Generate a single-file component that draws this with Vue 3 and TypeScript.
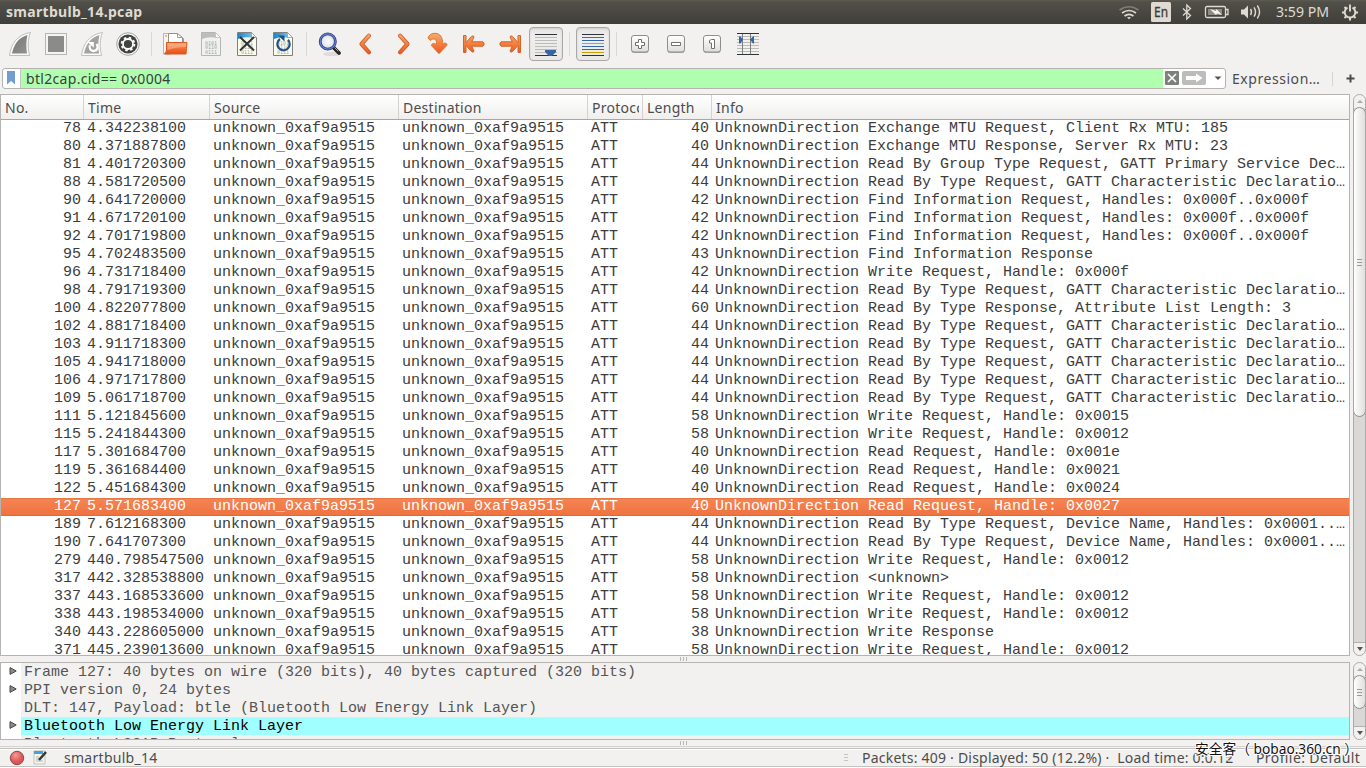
<script setup lang="ts">
interface Packet {
  no: number
  time: string
  len: number
  info: string
}

const host = 'unknown_0xaf9a9515'
const byType = 'Read By Type Request, GATT Characteristic Declaratio…'
const byName = 'Read By Type Request, Device Name, Handles: 0x0001..…'
const find = 'Find Information Request, Handles: 0x000f..0x000f'

const source: [number, string, number, string][] = [
  [78, '4.342238100', 40, 'Exchange MTU Request, Client Rx MTU: 185'],
  [80, '4.371887800', 40, 'Exchange MTU Response, Server Rx MTU: 23'],
  [81, '4.401720300', 44, 'Read By Group Type Request, GATT Primary Service Dec…'],
  [88, '4.581720500', 44, byType],
  [90, '4.641720000', 42, find],
  [91, '4.671720100', 42, find],
  [92, '4.701719800', 42, find],
  [95, '4.702483500', 43, 'Find Information Response'],
  [96, '4.731718400', 42, 'Write Request, Handle: 0x000f'],
  [98, '4.791719300', 44, byType],
  [100, '4.822077800', 60, 'Read By Type Response, Attribute List Length: 3'],
  [102, '4.881718400', 44, byType],
  [103, '4.911718300', 44, byType],
  [105, '4.941718000', 44, byType],
  [106, '4.971717800', 44, byType],
  [109, '5.061718700', 44, byType],
  [111, '5.121845600', 58, 'Write Request, Handle: 0x0015'],
  [115, '5.241844300', 58, 'Write Request, Handle: 0x0012'],
  [117, '5.301684700', 40, 'Read Request, Handle: 0x001e'],
  [119, '5.361684400', 40, 'Read Request, Handle: 0x0021'],
  [122, '5.451684300', 40, 'Read Request, Handle: 0x0024'],
  [127, '5.571683400', 40, 'Read Request, Handle: 0x0027'],
  [189, '7.612168300', 44, byName],
  [190, '7.641707300', 44, byName],
  [279, '440.798547500', 58, 'Write Request, Handle: 0x0012'],
  [317, '442.328538800', 58, '<unknown>'],
  [337, '443.168533600', 58, 'Write Request, Handle: 0x0012'],
  [338, '443.198534000', 58, 'Write Request, Handle: 0x0012'],
  [340, '443.228605000', 38, 'Write Response'],
  [371, '445.239013600', 58, 'Write Request, Handle: 0x0012'],
]
const packets: Packet[] = source.map(([no, time, len, info]) => ({ no, time, len, info }))
const selected = 127

const details = [
  { text: 'Frame 127: 40 bytes on wire (320 bits), 40 bytes captured (320 bits)', open: true, hot: false },
  { text: 'PPI version 0, 24 bytes', open: true, hot: false },
  { text: 'DLT: 147, Payload: btle (Bluetooth Low Energy Link Layer)', open: false, hot: false },
  { text: 'Bluetooth Low Energy Link Layer', open: true, hot: true },
  { text: 'Bluetooth L2CAP Protocol', open: true, hot: false },
]
const lineColors = ['#d8362f', '#3465a4', '#73c926', '#3465a4', '#75507b', '#c4a000']
</script>

<template>
  <div class="win">
    <header class="titlebar">
      <b class="title">smartbulb_14.pcap</b>
      <svg class="tray" width="266" height="24" viewBox="1100 0 266 24">
        <g fill="none" stroke-width="1.7">
          <path d="M1119.500 10q9.500-6.500 19 0" stroke="#807e77" />
          <path d="M1122 13q7-5 14 0M1124.500 16q4.500-3.400 9 0" stroke="#dfdbd2" />
        </g>
        <path d="M1127 17.500q2-1.200 4 0l-2 1.800z" fill="#dfdbd2" />
        <rect x="1151" y="2" width="20" height="20" rx="1.500" fill="#dfdbd2" />
        <text x="1154" y="17" class="lang" textLength="14" lengthAdjust="spacingAndGlyphs">En</text>
        <path d="M1183 8.500l7.500 7-3.700 3.500V5l3.700 3.500-7.500 7" fill="none" stroke="#dfdbd2" stroke-width="1.300" />
        <rect x="1205.500" y="6.500" width="20" height="11" rx="1.500" fill="none" stroke="#dfdbd2" stroke-width="1.300" />
        <path d="M1226 9.500h2v5h-2" fill="none" stroke="#dfdbd2" stroke-width="1.300" />
        <rect x="1208" y="9" width="14" height="6" fill="#8d8b84" />
        <path d="M1210 9l6 2 .5-2 5.500 6-5-1.500-1 1.500z" fill="#f5f3ee" />
        <path d="M1241 9.500h3l4-4v13l-4-4h-3z" fill="#dfdbd2" />
        <g fill="none" stroke="#dfdbd2" stroke-width="1.400">
          <path d="M1250.500 9q2 3 0 6M1254 7.300q3 4.700 0 9.400M1257.300 5.500q4.500 6.500 0 13" />
        </g>
        <text x="1276" y="17" class="clock" textLength="53" lengthAdjust="spacingAndGlyphs">3:59 PM</text>
        <path d="M1347.500 7.600a5.300 5.300 0 1 0 5 0" fill="none" stroke="#dfdbd2" stroke-width="1.900" />
        <path d="M1350 4.500v7" stroke="#dfdbd2" stroke-width="1.900" />
        <path d="M1344.500 7l1.700 1.700M1355.500 7l-1.700 1.700M1342 12.500h2.500M1355.500 12.500h2.500M1344.500 18l1.700-1.700M1355.500 18l-1.700-1.700M1350 17.500v3" stroke="#dfdbd2" stroke-width="2" />
      </svg>
    </header>

    <svg width="0" height="0" class="defs">
      <defs>
        <linearGradient id="orange" gradientUnits="userSpaceOnUse" x1="0" y1="7" x2="0" y2="28"><stop stop-color="#f3b06c" /><stop offset="1" stop-color="#f0531a" /></linearGradient>
        <linearGradient id="gray" x1="0" y1="0" x2="1" y2="1"><stop stop-color="#777976" /><stop offset="1" stop-color="#929391" /></linearGradient>
        <linearGradient id="folder" x1="0" y1="0" x2="0" y2="1"><stop stop-color="#f79a62" /><stop offset="1" stop-color="#e94b15" /></linearGradient>
        <linearGradient id="key" x1="0" y1="0" x2="0" y2="1"><stop stop-color="#fff" /><stop offset="1" stop-color="#deddda" /></linearGradient>
        <linearGradient id="sky" x1="0" y1="0" x2="1" y2="0"><stop stop-color="#2384c4" /><stop offset="1" stop-color="#6fc6ee" /></linearGradient>
        <radialGradient id="red" cx=".4" cy=".3"><stop stop-color="#f49a96" /><stop offset="1" stop-color="#dc5554" /></radialGradient>
        <radialGradient id="lens"><stop stop-color="#fff" /><stop offset="1" stop-color="#d6dce6" /></radialGradient>
      </defs>
    </svg>

    <nav class="toolbar">
      <svg class="ic" viewBox="0 0 36 36">
        <path d="M7.500 29.500C9 18 15 8.500 28.500 6.500 25.800 13 25.500 22 27.600 29.500z" fill="#fafafa" stroke="#bebebc" />
        <path d="M10 27.500C12 18.500 16.500 11.500 25.500 9 24 15 24 21 25 27.500z" fill="url(#gray)" />
      </svg>
      <svg class="ic" viewBox="0 0 36 36">
        <rect x="7.500" y="7.500" width="21" height="21" fill="#f4f4f3" stroke="#b5b5b3" />
        <rect x="10" y="10" width="16" height="16" fill="#8b8c8a" />
      </svg>
      <svg class="ic" viewBox="0 0 36 36">
        <path d="M7.500 29.500C9 18 15 8.500 28.500 6.500 25.800 13 25.500 22 27.600 29.500z" fill="#fafafa" stroke="#c1c1bf" />
        <path d="M10 27.500C12 18.500 16.500 11.500 25.500 9 24 15 24 21 25 27.500z" fill="#a2a3a1" />
        <path d="M16 19c-1.500 3.500 1 6.300 3.800 6 3.800-.3 5-4.300 2.700-7" fill="none" stroke="#fff" stroke-width="2.300" />
        <path d="M13.500 16h6.300v5.800z" fill="#fff" />
      </svg>
      <svg class="ic" viewBox="0 0 36 36">
        <circle cx="18" cy="18" r="11.300" fill="#f8f8f7" stroke="#a5a5a2" />
        <circle cx="18" cy="18" r="9.600" fill="#414342" />
        <circle cx="18" cy="18" r="6.400" fill="none" stroke="#fff" stroke-width="1.800" stroke-dasharray="2.500 2.527" />
        <circle cx="18" cy="18" r="5" fill="none" stroke="#fff" stroke-width="1.800" />
      </svg>
      <i class="sep" />
      <svg class="ic" viewBox="0 0 36 36">
        <path d="M6.500 28V7.500h5l2 2V28z" fill="#f7f5f2" stroke="#b9b5ae" />
        <path d="M11.500 18V7.500h9l5 4V18z" fill="#fff" stroke="#8f918d" />
        <path d="M20.500 7.500v4h5M25.500 12.500h1v4" fill="none" stroke="#9c9e9a" />
        <path d="M8 10h2" stroke="#f2a445" stroke-width="1.500" />
        <path d="M9.500 16.500h20.500q-.5 6-1 11.500H7.500q2-2 2-4z" fill="url(#folder)" stroke="#d95a22" />
        <path d="M10.500 17.500h18.500v3.500q-10 0-18.500 3z" fill="#ffc49a" opacity=".5" />
      </svg>
      <svg v-for="kind in ['save', 'close', 'reload']" :key="kind" class="ic" viewBox="0 0 36 36">
        <path d="M8.500 6.500h14l5 5v18h-19z" :fill="kind === 'save' ? '#f1f1f0' : '#fdfdec'" :stroke="kind === 'save' ? '#b5b5b3' : '#7e817c'" />
        <path d="M9 7h13l2 5q-8-2-15 1z" :fill="kind === 'save' ? '#bdbdbb' : 'url(#sky)'" />
        <path d="M22.500 6.500v5h5z" fill="#fff" :stroke="kind === 'save' ? '#bdbdbb' : '#979994'" stroke-width=".8" />
        <g class="bits">
          <text x="12" y="18.500">0101</text><text x="12" y="23">0110</text><text x="12" y="27.500">0111</text>
        </g>
        <path v-if="kind === 'close'" d="M11 11l14 13.500M25 11L11 24.500" stroke="#2e3436" stroke-width="2" />
        <g v-if="kind === 'reload'">
          <path d="M15 13a6.200 6.200 0 1 0 8 .8" fill="none" stroke="#234f91" stroke-width="2.200" />
          <path d="M13 9.500h6.500v6z" fill="#234f91" />
        </g>
      </svg>
      <i class="sep" />
      <svg class="ic" viewBox="0 0 36 36">
        <ellipse cx="20" cy="28" rx="9" ry="2" fill="#dddcd9" />
        <path d="M21.500 21.500l5.500 5.500" stroke="#252826" stroke-width="3.800" stroke-linecap="round" />
        <path d="M22.500 21.500l3.700 3.700" stroke="#a4a6a2" stroke-width="1" />
        <circle cx="15.800" cy="15.500" r="7.600" fill="url(#lens)" stroke="#2d3c80" stroke-width="2.800" />
        <circle cx="15.800" cy="15.500" r="7.600" fill="none" stroke="#6483cd" stroke-width="1.200" />
      </svg>
      <svg class="ic" viewBox="0 0 36 36">
        <path class="rim" d="M21 9.700l-7.500 8.300 7.500 8.300" /><path class="core" d="M21 9.700l-7.500 8.300 7.500 8.300" />
      </svg>
      <svg class="ic" viewBox="0 0 36 36">
        <path class="rim" d="M16 9.700l7.500 8.300-7.500 8.300" /><path class="core" d="M16 9.700l7.500 8.300-7.500 8.300" />
      </svg>
      <svg class="ic" viewBox="0 0 36 36">
        <path d="M8 12C9 8.500 12 7.300 15 7.300c5 0 7.800 3.700 7.800 11.200 2-2.500 4.500-1.300 4.200.7L19 27.700l-7.500-8c-.3-2.200 2.500-3.200 5-1.200.3-4-1-5.500-3-5.500-1.500 0-2 .8-3.200 1.500z" fill="url(#orange)" stroke="#d9702f" stroke-width=".9" stroke-linejoin="round" />
      </svg>
      <svg class="ic" viewBox="0 0 36 36">
        <path class="arrow" d="M7.500 9.500H10v7l5.500-6q2.200-1.500 2.500.5l-2.300 4.800h11.300q2.500 2.200 0 4.400H15.700l2.300 4.800q-.3 2-2.500.5L10 19.500v7H7.500z" />
      </svg>
      <svg class="ic" viewBox="0 0 36 36">
        <path class="arrow" d="M28.500 9.500H26v7l-5.500-6q-2.200-1.500-2.500.5l2.300 4.800H9q-2.500 2.200 0 4.400h11.300l-2.300 4.800q.3 2 2.500.5l5.500-6v7h2.500z" />
      </svg>
      <span class="ic pressed">
        <svg viewBox="0 0 36 36">
          <path d="M7 8.500h22M7 29.500h22" stroke="#2e3436" />
          <path d="M7 11.500h22M7 14.500h22M7 17.500h22M7 20.500h22M7 23.500h22M7 26.500h22" stroke="#babdb6" />
          <path d="M17 24h11v2l-4 4h-3l-4-4z" fill="#3465a4" />
        </svg>
      </span>
      <i class="sep" />
      <span class="ic pressed">
        <svg viewBox="0 0 36 36">
          <path d="M7 8.500h22M7 29.500h22" stroke="#2e3436" />
          <path v-for="(c, i) in lineColors" :key="i" :d="`M7 ${11.5 + i * 3}h22`" :stroke="c" />
        </svg>
      </span>
      <i class="sep" />
      <svg v-for="k in ['plus', 'minus', 'one']" :key="k" class="ic" viewBox="0 0 36 36">
        <rect x="9.500" y="10" width="17" height="17" rx="2.500" fill="#a8aaa6" />
        <rect x="9.500" y="9.500" width="17" height="16.500" rx="2.500" fill="url(#key)" stroke="#8c8e8a" />
        <path v-if="k === 'plus'" class="glyph" d="M16.500 13.500h3v3h3v3h-3v3h-3v-3h-3v-3h3z" />
        <path v-else-if="k === 'minus'" class="glyph" d="M13.500 16.500h9v3h-9z" />
        <path v-else class="glyph" d="M17.500 13.500h3v9h-3v-5.500h-2v-2.500z" />
      </svg>
      <svg class="ic" viewBox="0 0 36 36">
        <path d="M7 10.500h22M7 13.500h22M7 16.500h22M7 19.500h22M7 22.500h22M7 25.500h22" stroke="#babdb6" />
        <path d="M7 7.500h22M7 28.500h22" stroke="#2e3436" />
        <path d="M12.500 8v20M20.500 8v20" stroke="#7c7f7a" />
        <path d="M9 10.500h1.500l2.500 3-2.500 4H9zM24 10.500h-1l-3 3 3 4h1z" fill="#3465a4" />
      </svg>
    </nav>

    <div class="filter">
      <div class="field">
        <span class="mark"><svg width="8" height="14" viewBox="0 0 8 14"><path d="M0 0h8v13.500L4 10l-4 3.500z" fill="#739dcf" /></svg></span>
        <span class="expr">btl2cap.cid== 0x0004</span>
        <span class="acts">
          <svg width="62" height="19" viewBox="1163 69 62 19">
            <rect x="1165" y="71" width="14" height="14" rx="1" fill="#7e807c" />
            <path d="M1168 74l8 8M1176 74l-8 8" stroke="#fff" stroke-width="1.600" />
            <rect x="1182" y="71" width="24" height="14" rx="2" fill="#bcbdbb" />
            <path d="M1186 76h10v-2.500l6.500 4.500-6.500 4.500V80h-10z" fill="#fff" />
            <path d="M1214.500 76.500h7l-3.500 3.500z" fill="#555" />
          </svg>
        </span>
      </div>
      <span class="expression">Expression…</span>
      <i class="fsep" />
      <svg class="add" width="9" height="9" viewBox="0 0 9 9"><path d="M4.500 .5v8M.5 4.500h8" stroke="#4a4a4a" stroke-width="2" /></svg>
    </div>

    <section class="listpane">
      <div class="list">
        <div class="cols head">
          <span><em>No.</em></span><span><em>Time</em></span><span><em>Source</em></span><span><em>Destination</em></span>
          <span><em>Protocol</em></span><span><em>Length</em></span><span><em>Info</em></span>
        </div>
        <div v-for="p in packets" :key="p.no" class="cols row" :class="{ sel: p.no === selected }">
          <span class="num">{{ p.no }}</span><span>{{ p.time }}</span><span>{{ host }}</span><span>{{ host }}</span>
          <span>ATT</span><span class="num">{{ p.len }}</span><span>UnknownDirection {{ p.info }}</span>
        </div>
      </div>
      <div class="scroll">
        <i class="btn up" />
        <i class="thumb big"><b /></i>
        <i class="track" />
        <i class="btn down" />
      </div>
    </section>

    <div class="grip"><i /><i /><i /></div>

    <section class="detailpane">
      <div class="tree">
        <div v-for="d in details" :key="d.text" class="node" :class="{ hot: d.hot }">
          <span class="exp"><svg v-if="d.open" width="8" height="8" viewBox="0 0 8 8"><path d="M1 .6v6.800L7.200 4z" fill="#8d8d8c" stroke="#464646" /></svg></span>
          <span class="txt">{{ d.text }}</span>
        </div>
      </div>
      <div class="scroll">
        <i class="btn up" />
        <i class="thumb small"><b /></i>
        <i class="track" />
        <i class="btn down" />
      </div>
    </section>

    <div class="grip low"><i /><i /><i /></div>

    <footer class="status">
      <svg class="led" width="50" height="18" viewBox="0 748 50 18">
        <circle cx="17" cy="757" r="6.700" fill="url(#red)" stroke="#8b4a4c" />
        <path d="M34 750h11v13H34z" fill="#f4f4ec" stroke="#b4b7b2" stroke-width=".8" />
        <path d="M34 750h9v3h-9z" fill="#4aa0d4" />
        <path d="M36 756h3M36 758h3M36 760h7" stroke="#b4b7b2" />
        <path d="M39 759l7-8" stroke="#343837" stroke-width="2.500" />
      </svg>
      <span class="file">smartbulb_14</span>
      <span class="dots"><i /><i /><i /></span>
      <span class="packets">Packets: 409 · Displayed: 50 (12.2%) ·&nbsp; Load time: 0:0.12</span>
      <span class="dots"><i /><i /><i /></span>
      <span class="profile">Profile: Default</span>
    </footer>
    <div class="watermark"><svg width="166" height="22" viewBox="0 0 166 22"><text x="1" y="15" textLength="163" lengthAdjust="spacingAndGlyphs">安全客（ bobao.360.cn ）</text></svg></div>
  </div>
</template>

<style>
body { margin: 0; overflow: hidden; }
</style>

<style scoped>
.win { position: relative; width: 1366px; height: 768px; overflow: hidden; display: flex; flex-direction: column; background: #f2f1f0; color: #4c4c4c; font: 14px/20px "Noto Sans", sans-serif; }
.win * { box-sizing: border-box; }
.win > * { flex-shrink: 0; }
.defs { position: absolute; }
.titlebar { height: 24px; display: flex; justify-content: space-between; background: linear-gradient(#5d5b50 0, #504f48 10%, #3f3e39); }
.title { padding-left: 6px; line-height: 24px; font-size: 14px; color: #dfdbd2; letter-spacing: .3px; }
.lang { font: 14px "Noto Sans", sans-serif; fill: #3c3b37; stroke: #3c3b37; stroke-width: .3; }
.clock { font: 14px "Noto Sans", sans-serif; fill: #dfdbd2; }

.toolbar { height: 44px; padding: 2px 0 0 2px; display: flex; align-items: flex-start; }
.ic { display: block; width: 36px; height: 36px; flex: none; }
.ic svg { display: block; width: 36px; height: 36px; }
.pressed { width: 34px; height: 34px; margin: 1px; border: 1px solid #a9a8a6; border-radius: 4px; background: linear-gradient(#e6e5e4, #efeeed 30%, #e9e8e6); box-shadow: inset 0 1px 2px #cfcecb; }
.pressed svg { margin: -2px; }
.sep { width: 1px; height: 24px; margin: 6px 5px; background: #d9d8d6; }
.bits { font: 5px "DejaVu Sans Mono", monospace; fill: #a3a3a0; }
.rim, .core { fill: none; stroke-linecap: round; stroke-linejoin: round; }
.rim { stroke: #d26029; stroke-width: 4.200; }
.core { stroke: url(#orange); stroke-width: 2.500; }
.arrow { fill: url(#orange); stroke: #d66327; stroke-linejoin: round; }
.glyph { fill: #fff; stroke: #6f716d; }

.filter { height: 26px; display: flex; align-items: flex-start; padding-left: 2px; }
.field { width: 1224px; height: 21px; display: flex; border: 1px solid #b5b3b0; border-radius: 3px; background: #fff; overflow: hidden; }
.mark { width: 18px; border-right: 1px solid #c7c5c2; padding: 2px 0 0 4px; }
.mark svg { display: block; }
.expr { flex: 1; background: #afffaf; padding-left: 5px; line-height: 19px; color: #3c3c3c; letter-spacing: .32px; }
.acts, .acts svg { display: block; width: 62px; height: 19px; }
.expression { width: 89px; margin-left: 6px; line-height: 21px; letter-spacing: .55px; white-space: nowrap; }
.fsep { width: 1px; height: 14px; margin: 4px 13px 0 11px; background: #d6d4d2; }
.add { margin-top: 6px; }

.listpane { height: 562px; display: flex; justify-content: space-between; }
.list { width: 1350px; border: 1px solid #b6b4b1; overflow: hidden; background: #fff; }
.cols { display: grid; grid-template-columns: 82px 126px 189px 189px 55px 69px 638px; }
.head { grid-template-columns: 83px 126px 189px 189px 55px 69px 637px; height: 25px; background: linear-gradient(#fff, #f0efee); border-bottom: 1px solid #a9a7a4; letter-spacing: .25px; }
.head span { border-right: 1px solid #d5d3d0; padding: 0 3px 0 4px; line-height: 25px; overflow: hidden; }
.head span:last-child { border: 0; }
.head em { display: block; font-style: normal; overflow: hidden; white-space: nowrap; }
.row { height: 18px; font: 15px/17px "Liberation Mono", monospace; color: #3c3c3c; white-space: pre; }
.row span { padding-left: 4px; }
.row .num { padding: 0 2px 0 0; text-align: right; }
.row.sel { color: #fff; background: linear-gradient(#f58452, #ef7340); border-top: 1px solid #e97640; border-bottom: 1px solid #e26a37; line-height: 15px; }

.scroll { width: 13px; display: flex; flex-direction: column; border: 1px solid #aaa9a7; border-radius: 7px; background: #d9d8d6; overflow: hidden; }
.btn { height: 13px; background: #f2f1f0; display: flex; justify-content: center; align-items: center; flex: none; }
.btn::after { content: ""; border: 3px solid transparent; }
.up::after { border-bottom-color: #aaa; border-top: 0; }
.down::after { border-top: 4px solid #555; border-bottom: 0; }
.down { border-top: 1px solid #b1b0ae; border-radius: 0 0 6px 6px; }
.thumb { flex: none; margin: 0 -1px; border: 1px solid #8f8e8c; border-radius: 7px; background: linear-gradient(90deg, #fff, #efeeed 50%, #dededc); display: flex; align-items: center; justify-content: center; }
.thumb b { width: 5px; height: 7px; background: repeating-linear-gradient(#999 0 1px, transparent 1px 3px); }
.big { height: 310px; margin-top: -1px; }
.small { height: 34px; margin-top: -1px; }
.track { flex: 1; }

.grip { height: 6px; display: flex; justify-content: center; align-items: center; gap: 2px; }
.grip i { width: 1px; height: 4px; background: #b9b7b5; }
.detailpane { height: 78px; display: flex; justify-content: space-between; }
.tree { width: 1350px; border: 1px solid #b6b4b1; overflow: hidden; }
.node { height: 18px; display: flex; font: 15px/19px "Liberation Mono", monospace; color: #555; white-space: pre; }
.exp { width: 20px; background: #fff; padding: 4px 0 0 8px; }
.exp svg { display: block; }
.txt { flex: 1; padding-left: 3px; }
.hot .txt { background: #a0ffff; color: #000; }
.low { height: 7px; border-bottom: 1px solid #d5d3d1; }

.status { height: 19px; margin-top: 1px; display: flex; align-items: flex-start; border-top: 1px solid #c4c2bf; border-bottom: 1px solid #c4c2bf; box-shadow: inset 0 1px #fff, 0 1px #fff; line-height: 18px; white-space: nowrap; }
.led { display: block; flex: none; }
.file { width: 794px; padding-left: 14px; letter-spacing: .28px; }
.dots { width: 5px; height: 9px; margin-top: 5px; display: flex; flex-direction: column; gap: 2px; flex: none; }
.dots i { width: 4px; height: 1px; background: #c5c3c1; }
.packets { width: 377px; padding-left: 13px; letter-spacing: .22px; }
.profile { padding-left: 25px; letter-spacing: .4px; }
.watermark { position: absolute; left: 1194px; top: 739px; }
.watermark text { font: 14px "Noto Sans", "Noto Sans CJK SC", sans-serif; fill: #111; stroke: #fff; stroke-width: 2px; paint-order: stroke; }
</style>
